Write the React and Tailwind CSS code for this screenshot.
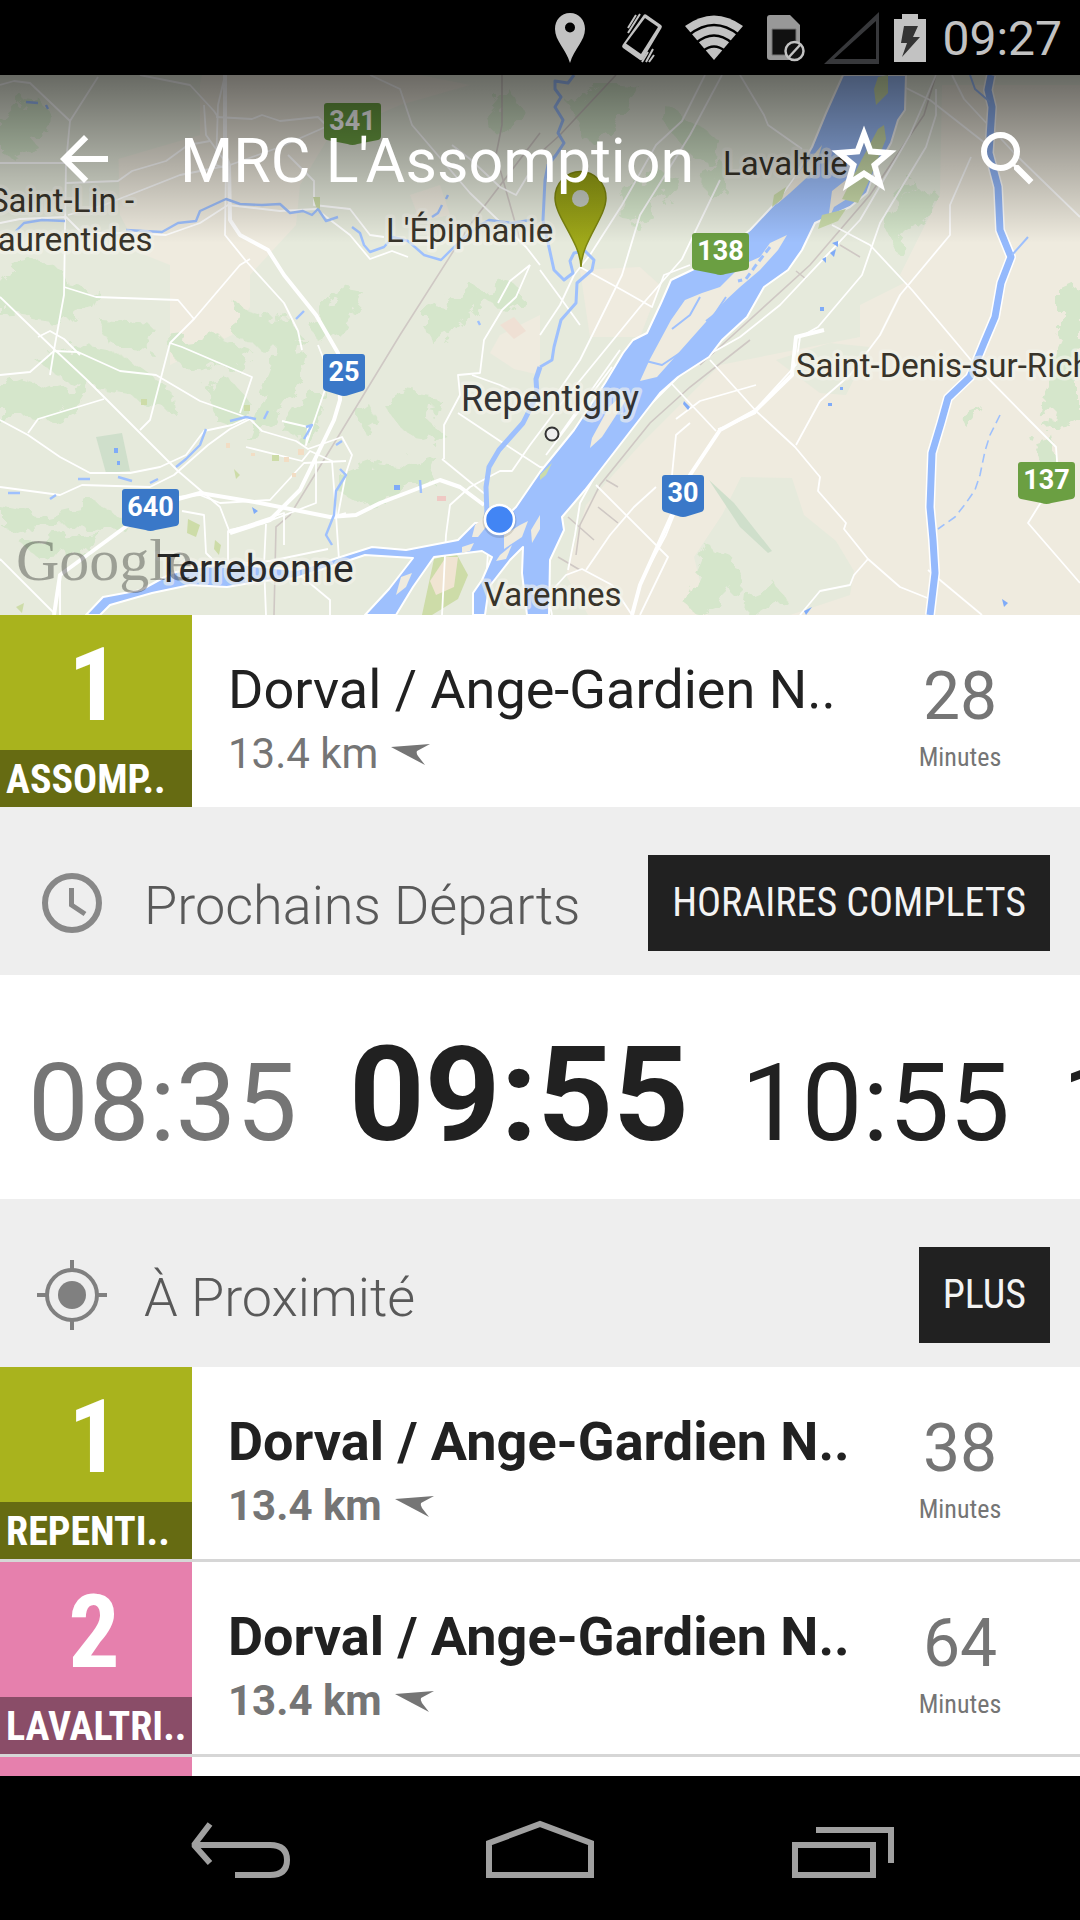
const ROBOTO = "font-['Roboto','Noto_Sans',sans-serif]";
const NARROW = "font-['Roboto_Condensed','Liberation_Sans_Narrow','Roboto',sans-serif]";

const WOODS = [
  'M0 45L22 22L40 24L50 40L48 58L30 62L38 72L14 84L0 76Z',
  'M14 190L40 184L62 194L66 208L100 216L92 232L76 236L60 250L34 246L20 238L0 240V206Z',
  'M100 244L128 246L152 250L146 268L150 276L112 272Z',
  'M236 228L262 244L288 240L300 260L286 275L262 274L232 258Z',
  'M340 212L362 216L350 240L332 258L318 266L308 250L326 234Z',
  'M424 228L444 232L470 208L490 222L470 240L456 262L436 272L424 252Z',
  'M478 220L506 206L522 216L512 240L496 232Z',
  'M488 44L512 16L520 34L508 60L494 58Z',
  'M570 30L600 8L640 12L622 40L600 66L580 62Z',
  'M664 30L690 44L720 66L716 90L694 84L672 58L662 44Z',
  'M620 120L650 96L680 104L660 130L636 152L622 144Z',
  'M700 100L724 88L732 108L712 126Z',
  'M884 152L900 128L918 112L938 118L930 136L906 160L896 178Z',
  'M890 118L908 100L916 112L900 128Z',
  'M0 310L20 302L60 314L96 306L80 330L52 346L28 342L0 348Z',
  'M34 284L74 270L108 276L140 292L168 312L172 336L146 330L128 318L90 312L60 302Z',
  'M166 268L214 262L252 276L240 296L206 290L178 288Z',
  'M206 314L232 306L252 330L236 352L214 344Z',
  'M284 266L308 265L300 300L280 330L262 362L246 364L262 320Z',
  'M300 330L326 314L318 348L300 366L282 356Z',
  'M384 330L408 316L436 320L430 348L446 360L424 366L400 352Z',
  'M342 396L372 384L412 390L438 382L430 404L396 420L360 430L342 420Z',
  'M0 432L44 440L96 428L128 444L120 456L60 450L20 456L0 450Z',
  'M20 468L60 462L100 456L86 480L40 484Z',
  'M356 340L370 330L378 346L362 356Z',
  'M1060 215L1080 206V340L1066 352L1044 354L1050 330L1042 322L1054 300L1048 288L1060 262Z',
  'M1034 366L1052 360L1058 392L1042 398Z',
  'M708 472L732 482L744 510L722 532L700 540L684 528L694 504Z',
  'M746 520L776 508L784 524L762 538L744 536Z',
  'M960 340L982 332L974 346L966 352Z',
];

const PALE_WOODS = [
  'M0 0H200V60L118 84V150H0Z',
  'M741 402L792 403L804 440L836 466L854 496L850 520L790 540H708L694 482L722 440Z',
  'M776 285L830 268L870 272L846 320L820 318Z',
];

const BEIGE = [
  'M118 64L190 58L202 0H420L470 10L400 30L330 60L300 110L296 150L250 200V232L232 260L170 290V190L140 178L120 140Z',
  'M500 260L540 240V300L514 294L490 278Z',
  'M580 195L640 192L660 210L640 262H590Z',
  'M942 10H1080V280L1060 290L1036 265L960 262L900 200L940 120Z',
  'M860 230L940 190L1080 170V540H588L566 500L586 430L640 370L720 290L860 262Z',
  'M410 120L440 110L450 140L420 146Z',
];

const ROADS = [
  'M0 10L14 6L30 8L70 46L98 2',
  'M70 46L66 88L0 88',
  'M66 88L64 220L54 275L50 300',
  'M66 108L118 106L132 96L166 86L188 70L210 66',
  'M68 140L104 130L180 100L230 90L280 72L330 50',
  'M140 0L190 10L214 36L218 42',
  'M216 42L252 44L262 40L280 46L318 42L330 54',
  'M225 0L218 30L216 90L228 94',
  'M204 30L206 60L226 88L225 160L246 186L284 228L298 256L302 275',
  'M288 80L314 106L314 130L350 134L370 160L384 162',
  'M0 148L20 144L66 142L82 158L130 158L166 160L200 148L228 130L280 136L316 134L350 160L370 184L392 176L408 182',
  'M370 0L400 14L412 50L470 118L526 172L540 190',
  'M452 70L470 84L500 112L516 120L528 100',
  'M0 222L55 275L86 304L178 396L220 432L230 458',
  'M64 212L96 222L178 225L194 244L240 190L250 184',
  'M38 262L50 256L64 264L80 280',
  'M194 244L170 268L150 345L140 355',
  'M0 300L30 297L54 276L78 277L120 296L156 300L200 326L240 340L250 344L230 354L208 370L174 400L150 412L82 410L60 420L0 412',
  'M0 345L28 360L60 382L90 398L130 398L160 392L186 380L204 356L232 350L250 342',
  'M28 358L38 344L104 324',
  'M170 268L182 272L252 302L240 338',
  'M250 344L262 356L296 366L308 374L342 362L352 380L346 398L338 440L346 438',
  'M246 372L302 386L310 376L332 386L336 440L340 500',
  'M282 346L308 352L306 370L330 300L318 270',
  'M346 386L304 388L270 425L220 428L200 420L178 422',
  'M182 436L204 440L206 478L214 486L248 488L270 486L328 474',
  'M230 455L264 448L316 428L316 380',
  'M228 500V456L248 450L284 438L284 470',
  'M266 449L264 490L266 540',
  'M0 484L54 538',
  'M60 540L60 500L74 490',
  'M330 540V525L300 500',
  'M442 540L446 460L450 430L470 412L500 396L512 396L530 370L560 330L640 232L682 184L720 105',
  'M444 384V350L460 320L458 300L480 298L484 265L502 235L516 222L530 190',
  'M442 384L486 420L490 445L484 540',
  'M458 338L500 366L540 392L556 394',
  'M472 300L500 310L540 330',
  'M530 190L510 206L498 228',
  'M540 195L562 225L580 250',
  'M556 365L620 275M546 380L612 292M556 405L598 338',
  'M880 0L930 25L990 72',
  'M936 14V40L926 72L880 148L862 200L818 252L800 262L796 290L755 335L720 355L690 400L666 460L640 508L632 540',
  'M722 0L690 60L640 140L622 200L580 285L556 320',
  'M705 0L682 46L656 70L622 130L590 180L574 200L560 230L540 260',
  'M740 0L764 40L768 50L802 74',
  'M832 150L870 170L912 215L960 272L975 290L1028 344L1056 372L1058 400L1028 448L1080 508',
  'M580 192L622 215L652 232L664 200L690 190',
  'M952 0L964 24L1016 80L1080 142',
  'M971 82L950 130L950 160L900 220L880 260L850 300L820 326L796 370',
  'M710 285L756 336L795 372L820 402L818 416L846 448L844 454L868 484L900 512L930 524',
  'M868 484L854 500L850 510L820 516L800 540',
  'M654 290L716 356',
  'M676 344L700 326L756 310',
  'M718 354L730 350L756 338',
  'M672 400L676 360L690 348M656 412L634 432L610 460L586 495',
  'M596 410L668 482L640 540',
  'M928 495L982 540',
  'M552 540L548 520L566 500L582 494L612 510L632 540',
  'M568 495L575 460L580 428L600 392L650 330L690 290L740 262L780 230L860 145L910 60L936 0',
  'M1010 185L1000 140V110',
];

const HIGHWAYS = [
  'M225 0V80L229 90L230 145L240 160L268 175L284 200L316 240L338 278L340 325L334 345L300 415L270 445L230 458',
  'M178 424L200 418L260 428L330 442L356 440L380 428L440 405L460 412L484 430',
  'M128 450L60 500L54 540',
  'M824 255L796 262L792 300L755 336L720 355L690 400L640 510L632 540',
];

const ISLANDS = [
  'M787 160L778 175L760 195L740 212L726 225L705 248L681 275L657 302L640 306L650 284L671 245L685 225L702 218L720 212L742 190L760 182L770 168Z',
  'M626 325L602 362L590 373L592 363L609 332L618 324Z',
  'M822 70L814 96L790 118L776 130L800 96Z',
  'M870 86L864 104L850 122L834 132L828 146L832 116Z',
  'M475 450L487 440L486 452L478 462L472 462Z',
  'M462 472L474 468L470 476L462 478Z',
  'M504 460L520 450L528 446L522 462L504 474Z',
  'M500 480L512 470L506 484L496 486Z',
  'M531 455L540 440V454L532 468Z',
  'M401 502L412 498L406 512L396 520Z',
];
const GREEN_ISLANDS = [
  'M878 2L888 0L888 18L876 30L874 14Z',
  'M884 50L886 64L868 108L858 128L842 124L862 84L878 54Z',
  'M822 140L846 134L838 146L818 154Z',
  'M786 112L782 124L772 132L774 120Z',
  'M540 400L552 388L546 400L540 405Z',
];

function Shield({ x, y, w, fill, children }) {
  const m = w / 2;
  return (
    <g transform={`translate(${x} ${y})`}>
      <path d={`M3 0H${w - 3}Q${w} 0 ${w} 3V33Q${w} 36 ${w - 3} 37L${m + 5} 41Q${m} 43 ${m - 5} 41L3 37Q0 36 0 33V3Q0 0 3 0Z`} fill={fill} />
      <text x={m} y={27} textAnchor="middle" fontSize="27" fontWeight="700" fill="#fff">{children}</text>
    </g>
  );
}

function Place({ x, y, size = 33, fill = '#38342a', children }) {
  return (
    <text x={x} y={y} fontSize={size} fill={fill} stroke="#f4f4ec" strokeOpacity=".6" strokeWidth="7" strokeLinejoin="round" paintOrder="stroke">{children}</text>
  );
}

function RegionMap() {
  return (
    <svg viewBox="0 0 1080 540" className={`block h-auto w-full ${ROBOTO}`} role="img" aria-label="Carte de la région">
      <defs>
        <linearGradient id="pin" x1="0" y1="0" x2="0" y2="1">
          <stop offset="0" stopColor="#929c14" />
          <stop offset="1" stopColor="#a5ae1c" />
        </linearGradient>
        <filter id="rough" x="0" y="0" width="1" height="1">
          <feTurbulence type="fractalNoise" baseFrequency="0.06" numOctaves="3" seed="4" />
          <feDisplacementMap in="SourceGraphic" scale="26" />
        </filter>
      </defs>
      <rect width="1080" height="540" fill="#e6eadc" />
      <g fill="#efebdf">{BEIGE.map((d) => <path key={d} d={d} />)}</g>
      <g fill="#e6eadc">{PALE_WOODS.map((d) => <path key={d} d={d} />)}</g>
      <g fill="#d5e6cb" filter="url(#rough)">{WOODS.map((d) => <path key={d} d={d} />)}</g>
      <path d="M96 362L122 358L130 396L106 398Z" fill="#cfdfcb" />
      <path d="M709 405L734 428L772 476L768 478L740 452Z" fill="#cfdfcb" />
      <path d="M434 484L456 478L468 500L458 524L432 540H422Z" fill="#cddca8" />
      <path d="M446 482L458 482L454 512L436 520L430 506Z" fill="#f0e4d2" />
      <path d="M500 250L514 242L526 256L514 264Z" fill="#efe0d4" />
      <path d="M437 421H446V426H437Z" fill="#efc9c4" />
      <g fill="none" stroke="#cfc8c4" strokeWidth="1.6">
        <path d="M540 58L470 150L400 260L330 375L290 440L276 452L274 540" />
        <path d="M616 0L560 60L540 78M502 0V50L496 80L520 165" />
        <path d="M750 265L690 312L650 348L600 410L580 450L576 480M606 405L618 412M598 432L618 448M568 442L594 465M558 482L580 495" />
        <path d="M936 0L924 40L870 120L810 190L700 290M796 196L806 204M840 170L860 182" />
      </g>
      <g fill="none" stroke="#fff" strokeWidth="1.8" strokeLinejoin="round">{ROADS.map((d) => <path key={d} d={d} />)}</g>
      <g fill="none" stroke="#fff" strokeWidth="4" strokeLinejoin="round">{HIGHWAYS.map((d) => <path key={d} d={d} />)}</g>
      <path
        d="M843 0L826 38L812 72L793 105L781 122L750 155L720 180L692 195L671 205L661 228L647 258L633 265L623 278L605 308L574 355L540 397L516 432L499 448L475 448L458 465L406 475L372 472L331 485L296 495L262 492L232 488L200 492L172 498L141 515L103 522L86 540H100L110 530L152 518L190 510L227 512L262 506L296 503L365 480L413 483L389 514L365 540H396L413 512L434 482L482 476L492 482L482 505L473 518V540H485L489 512L510 485L523 472L522 498L527 540H549L550 485L564 455L562 442L585 415L626 362L660 318L678 302L709 282L722 265L747 242L764 212L788 195L802 175L815 148L850 132L867 118L874 98L891 68L898 45L905 35L906 0Z"
        fill="#9ec0fd"
        stroke="#fff"
        strokeWidth="2"
        strokeLinejoin="round"
      />
      <g fill="#efebdf">{ISLANDS.map((d) => <path key={d} d={d} />)}</g>
      <g fill="#cbdcab">{GREEN_ISLANDS.map((d) => <path key={d} d={d} />)}</g>
      <g fill="none" stroke="#9ec0fd" strokeLinejoin="round">
        <path d="M646 286L662 290L680 278M700 222L690 240L672 254M726 222L714 240L706 246" strokeWidth="2" />
        <path d="M770 172L756 190L746 204L738 206" strokeWidth="3" strokeDasharray="7 4" />
        <path stroke="#fff" strokeWidth="10" d="M991 0L988 15L992 32L989 78L998 112L1000 155L1011 182L1001 208L995 242L984 268L970 302L948 323L941 348L932 378L930 432L933 465L935 498L930 540" />
        <path stroke="#94b9fc" d="M991 0L988 15L992 32L989 78L998 112L1000 155L1011 182L1001 208L995 242L984 268L970 302L948 323L941 348L932 378L930 432L933 465L935 498L930 540" strokeWidth="7" />
        <path d="M990 27L975 14L970 0M1012 180L1028 162" strokeWidth="2" />
        <path d="M574 0L568 8L555 6V14L561 22L555 32L563 45L558 58L564 68L556 80L548 90L545 105L543 145L554 195L564 205L573 198L570 186L574 178L585 176L594 185L592 195L577 208L576 228L561 245L554 272L552 285L540 292" strokeWidth="3" />
        <path d="M540 292L536 304L537 320L523 348L499 375L489 392L486 412L487 440" strokeWidth="5" />
        <path d="M16 156L24 148L42 145L65 146M126 155L162 157L178 148L196 146L200 136L226 124L240 129L262 130L280 129L290 138L303 136L312 140L318 134L326 146L338 142M352 152L360 158L364 170L370 177L384 172L393 162L408 166L424 180L441 185L458 168L480 150L489 145L512 148L530 145" strokeWidth="2.4" />
        <path d="M26 27L38 28M46 30L48 34M432 142L438 138L442 130M446 124L448 120M296 244L304 236M478 246L480 250M230 346L246 342L256 344M264 344L268 336M206 354L200 370L186 384L176 392M78 404L90 404M118 402L132 406M150 408L158 404M306 352L312 350L304 364M336 370L342 366M340 394L346 400L336 416L334 440L326 460L332 470M396 412H398M420 405L421 418M50 424L56 420M8 418L20 418" strokeWidth="2.4" />
        <path d="M1000 340L990 360L985 376L980 400L975 415L966 428L955 442L938 454" strokeWidth="1.6" strokeDasharray="9 5" />
      </g>
      <g fill="#7fabf8">
        <path d="M830 178L836 174L834 182ZM832 168L838 166V172ZM822 184L826 182V188ZM820 232H824V236H820ZM684 326L690 332L688 335L683 329ZM394 410H400V415H394ZM114 373H118V378H114ZM117 386H120V390H117ZM828 328H832V331H828ZM840 312H843V315H840ZM252 432L258 436L254 439ZM1002 524L1008 528L1004 532ZM804 536L812 532L806 540Z" />
      </g>
      <g fill="#cddca8">
        <path d="M313 122H320V134L316 132ZM141 324H147V330H141ZM244 330H250V336H244ZM272 380H279V386H272ZM188 444L200 450L196 462L187 458ZM215 465L221 470L219 480L214 474ZM234 394L240 400L236 404ZM16 532L24 528L22 538Z" />
      </g>
      <g fill="#f2ddc4">
        <path d="M226 368H230V373H226ZM298 374H304V380H298ZM284 382H289V387H284ZM292 398H296V402H292ZM251 378H255V381H251Z" />
      </g>

      <Place x={-11} y={137}>Saint-Lin -</Place>
      <Place x={-20} y={176}>Laurentides</Place>
      <Place x={386} y={167}>L&#39;Épiphanie</Place>
      <Place x={723} y={100}>Lavaltrie</Place>
      <Place x={796} y={302}>Saint-Denis-sur-Richelieu</Place>
      <Place x={484} y={531}>Varennes</Place>
      <Place x={461} y={336} size={36} fill="#333">Repentigny</Place>
      <Place x={157} y={507} size={39} fill="#2a2a2a">Terrebonne</Place>
      <text x="16" y="505" fontSize="60" fontFamily="'Liberation Serif', serif" fill="#000" fillOpacity=".32">Google</text>

      <Shield x={324} y={28} w={57} fill="#6b9f42">341</Shield>
      <Shield x={692} y={158} w={57} fill="#6b9f42">138</Shield>
      <Shield x={1018} y={387} w={57} fill="#6b9f42">137</Shield>
      <Shield x={323} y={279} w={42} fill="#3a78c8">25</Shield>
      <Shield x={122} y={414} w={57} fill="#3a78c8">640</Shield>
      <Shield x={662} y={400} w={42} fill="#3a78c8">30</Shield>

      <circle cx="552" cy="359" r="6.5" fill="#eee" stroke="#333" strokeWidth="2" />
      <circle cx="499.5" cy="446" r="17" fill="#000" fillOpacity=".12" />
      <circle cx="499.5" cy="444.5" r="14.5" fill="#4285f4" stroke="#fff" strokeWidth="2.5" />
      <path d="M581 192C580 166 555 142 555 123A25.5 26.5 0 0 1 606 123C606 142 582 166 581 192Z" fill="url(#pin)" stroke="#7c8510" strokeWidth="1.5" />
      <circle cx="580.5" cy="123.5" r="8.500" fill="#c3c9c0" />
    </svg>
  );
}

function StatusBar() {
  return (
    <div className="flex h-[75px] shrink-0 items-center justify-end bg-black pr-[18px]">
      <span className="flex w-[72px] justify-center">
        <svg viewBox="0 0 32 50" className="h-[50px] w-8" fill="#c2c2c2" aria-hidden="true">
          <path fillRule="evenodd" d="M16 0C7 0 1 7 1 16C1 28 12 36 16 50C20 36 31 28 31 16C31 7 25 0 16 0ZM16 9.500A5 5 0 1 1 16 19.500A5 5 0 1 1 16 9.500Z" />
        </svg>
      </span>
      <span className="flex w-[72px] justify-center">
        <svg viewBox="0 0 42 50" className="h-[50px] w-[42px]" fill="none" stroke="#c2c2c2" strokeWidth="2" aria-hidden="true">
          <path d="M25 1.500L40 12Q41.500 13 40.500 15L22 46Q21 48 19 47L2 35Q.5 34 1.500 32L22 3Q23 .5 25 1.500Z" fill="#c2c2c2" stroke="none" />
          <path d="M24 5L37 14L20 41L5 30.500Z" fill="#000" stroke="none" />
          <path d="M7 15L15 2M7 20L19 1M21 49L27 39M25 49L32 36M28 49L33 42" />
        </svg>
      </span>
      <span className="flex w-[72px] justify-center">
        <svg viewBox="0 0 60 46" className="h-[46px] w-[60px]" aria-hidden="true">
          <path d="M30 45L1 11Q30 -10 59 11Z" fill="#c2c2c2" />
          <g fill="none" stroke="#000" strokeWidth="2.500">
            <path d="M5 20Q30 0 55 20M12 28Q30 13 48 28M19 36Q30 27 41 36" />
          </g>
        </svg>
      </span>
      <span className="flex w-[72px] justify-center">
        <svg viewBox="0 0 40 50" className="h-[50px] w-10" aria-hidden="true">
          <path d="M4 2H24L34 12V44Q34 47 31 47H4Q1 47 1 44V5Q1 2 4 2Z" fill="#989898" />
          <path d="M6 16H30V42H6Z" fill="#111" stroke="#777" />
          <circle cx="28.500" cy="38" r="9" fill="#111" stroke="#c2c2c2" strokeWidth="2.500" />
          <path d="M23 44L34 32" stroke="#c2c2c2" strokeWidth="2.500" />
        </svg>
      </span>
      <span className="flex w-[60px] justify-center">
        <svg viewBox="0 0 56 52" className="h-[52px] w-14" aria-hidden="true">
          <path fillRule="evenodd" d="M0 52L55 0V52ZM10 47H52V9Z" fill="#37383b" />
        </svg>
      </span>
      <span className="flex w-14 justify-center">
        <svg viewBox="0 0 32 48" className="h-12 w-8" aria-hidden="true">
          <path d="M8 0H24V5H32V48H0V5H8Z" fill="#c2c2c2" />
          <path d="M10 12H24L19 23H26L8 43L13 29H7Z" fill="#333" />
        </svg>
      </span>
      <time className="pt-0.5 pl-1 text-[48px] leading-[56px] text-[#c2c2c2]">09:27</time>
    </div>
  );
}

function Toolbar() {
  return (
    <div className="absolute inset-x-0 top-0 flex h-[168px] items-center bg-linear-to-b from-black/55 to-black/0 pl-12 text-white">
      <button type="button" aria-label="Retour" className="size-[72px] shrink-0">
        <svg viewBox="0 0 24 24" className="size-[72px]" fill="currentColor"><path d="M20 11H7.830l5.590-5.590L12 4l-8 8 8 8 1.410-1.410L7.830 13H20v-2z" /></svg>
      </button>
      <h1 className="min-w-0 flex-1 truncate pt-1 pl-[60px] text-[61px] leading-[72px]">MRC L&#39;Assomption</h1>
      <button type="button" aria-label="Ajouter aux favoris" className="flex w-36 shrink-0 justify-center">
        <svg viewBox="0 0 72 72" className="size-[72px]" fill="none" stroke="currentColor" strokeWidth="6" strokeMiterlimit="10">
          <path d="M36 11L42.500 28.500L61 30L46.500 42L52 61L36 50.500L20 61L25.500 42L11 30L29.500 28.500Z" />
        </svg>
      </button>
      <button type="button" aria-label="Rechercher" className="flex w-36 shrink-0 justify-center">
        <svg viewBox="0 0 24 24" className="size-[72px]" fill="currentColor"><path d="M15.500 14h-.79l-.28-.27A6.471 6.471 0 0 0 16 9.500 6.500 6.500 0 1 0 9.500 16c1.610 0 3.090-.59 4.230-1.570l.27.28v.79l5 4.990L20.490 19l-4.990-5zm-6 0C7.010 14 5 11.990 5 9.500S7.010 5 9.500 5 14 7.010 14 9.500 11.990 14 9.500 14z" /></svg>
      </button>
    </div>
  );
}

function Badge({ number, name, top, bottom }) {
  return (
    <div className={`flex w-48 shrink-0 flex-col font-bold text-white ${top} ${NARROW}`}>
      <div className="flex h-[135px] items-center justify-center pt-1 pr-1 text-[102px] leading-[102px]">{number}</div>
      <div className={`h-[57px] overflow-hidden pl-1.5 text-[40px] leading-[60px] whitespace-nowrap ${bottom}`}>{name}</div>
    </div>
  );
}

const OLIVE = { top: 'bg-[#a9b31d]', bottom: 'bg-[#666b12]' };
const PINK = { top: 'bg-[#e680ad]', bottom: 'bg-[#8a4d68]' };

function StopRow({ number, name, colors, minutes, strong }) {
  return (
    <div className="box-content flex h-48 bg-white">
      <Badge number={number} name={name} {...colors} />
      <div className={`min-w-0 flex-1 pt-[43px] pl-9 ${strong ? 'font-bold' : 'font-normal'}`}>
        <div className="text-[54px] leading-[64px] whitespace-nowrap text-[#212121]">Dorval / Ange-Gardien N..</div>
        <div className="flex items-center gap-3 text-[42px] leading-[64px] text-[#757575]">
          13.4 km
          <svg viewBox="0 0 40 22" className="h-[22px] w-10" fill="#757575" aria-hidden="true"><path d="M1 4L40 1L27 8Q26 10 28 13L35 22Z" /></svg>
        </div>
      </div>
      <div className="w-60 shrink-0 pt-[42px] text-center text-[#757575]">
        <div className="text-[66px] leading-[80px]">{minutes}</div>
        <div className={`text-[26px] leading-[40px] ${NARROW}`}>Minutes</div>
      </div>
    </div>
  );
}

function SectionHeader({ icon, title, action }) {
  return (
    <div className="flex h-[168px] items-center bg-[#eeeeee] pt-6 pr-[30px] pl-9">
      {icon}
      <h2 className="flex-1 pt-1.5 pl-9 text-[54px] leading-[64px] font-light text-[#595959]">{title}</h2>
      <button type="button" className={`h-24 bg-[#212121] px-6 text-[40px] leading-[48px] text-[#f3f3f3] ${NARROW}`}>{action}</button>
    </div>
  );
}

function ClockIcon() {
  return (
    <svg viewBox="0 0 72 72" className="size-[72px] shrink-0" fill="none" stroke="#888" aria-hidden="true">
      <circle cx="36" cy="36" r="27" strokeWidth="6" />
      <path d="M35.500 21V38L49 47" strokeWidth="5" />
    </svg>
  );
}

function TargetIcon() {
  return (
    <svg viewBox="0 0 72 72" className="size-[72px] shrink-0" fill="none" stroke="#808080" strokeWidth="4" aria-hidden="true">
      <circle cx="36" cy="36" r="25" />
      <circle cx="36" cy="36" r="14" fill="#808080" stroke="none" />
      <path d="M36 1V11M36 61V71M1 36H11M61 36H71" />
    </svg>
  );
}

function NavBar() {
  return (
    <nav className="flex h-36 shrink-0 items-center justify-center bg-black text-[#a0a0a0]">
      <button type="button" aria-label="Précédent" className="flex w-[300px] justify-center">
        <svg viewBox="0 0 100 60" className="h-[60px] w-[100px]" fill="none" stroke="currentColor" strokeWidth="6">
          <path d="M4 27H80Q97 27 97 42T80 57H45" />
          <path d="M20 6L4 27L20 45" strokeLinejoin="bevel" />
        </svg>
      </button>
      <button type="button" aria-label="Accueil" className="flex w-[300px] justify-center">
        <svg viewBox="0 0 108 60" className="h-[60px] w-[108px]" fill="none" stroke="currentColor" strokeWidth="6">
          <path d="M3 57V25L54 6L105 25V57Z" />
        </svg>
      </button>
      <button type="button" aria-label="Applications récentes" className="flex w-[300px] justify-center">
        <svg viewBox="0 0 108 60" className="h-[60px] w-[108px]" fill="none" stroke="currentColor" strokeWidth="6">
          <path d="M9 27H87V57H9Z" />
          <path d="M30 12H105V45" />
        </svg>
      </button>
    </nav>
  );
}

export default function App() {
  return (
    <div className={`flex h-screen flex-col overflow-hidden bg-white ${ROBOTO}`}>
      <StatusBar />
      <main className="min-h-0 flex-1 overflow-hidden">
        <header className="relative overflow-hidden">
          <RegionMap />
          <Toolbar />
        </header>
        <StopRow number="1" name="ASSOMP.." colors={OLIVE} minutes="28" />
        <SectionHeader icon={<ClockIcon />} title="Prochains Départs" action="HORAIRES COMPLETS" />
        <div className="flex h-56 items-baseline gap-13 overflow-hidden pt-10 pl-7 text-[108px] leading-[160px] whitespace-nowrap text-[#212121]">
          <time className="text-[#757575]">08:35</time>
          <time className="text-[132px] font-bold">09:55</time>
          <time>10:55</time>
          <time>11:55</time>
        </div>
        <SectionHeader icon={<TargetIcon />} title="À Proximité" action="PLUS" />
        <div className="divide-y-3 divide-[#d6d6d6]">
          <StopRow number="1" name="REPENTI.." colors={OLIVE} minutes="38" strong />
          <StopRow number="2" name="LAVALTRI.." colors={PINK} minutes="64" strong />
          <StopRow number="2" name="LAVALTRI.." colors={PINK} minutes="72" strong />
        </div>
      </main>
      <NavBar />
    </div>
  );
}
